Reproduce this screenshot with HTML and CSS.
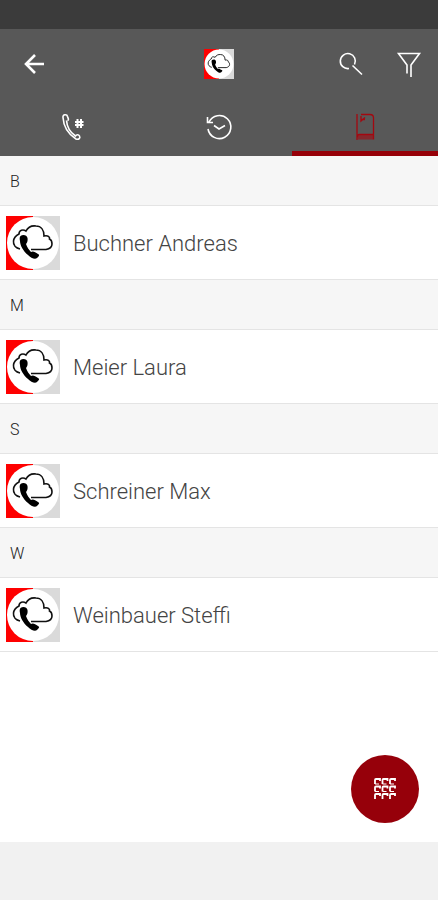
FILE: index.html
```html
<!DOCTYPE html>
<html lang="de">
<head>
<meta charset="utf-8">
<meta name="viewport" content="width=device-width, initial-scale=1">
<title>Kontakte</title>
<link rel="stylesheet" href="styles.css">
</head>
<body>
<svg class="sprite" aria-hidden="true">
  <symbol id="cloud-phone" viewBox="0 0 54 54">
    <path fill="#dadada" d="M0 0h54v54H0z"/>
    <path fill="#fe0000" d="M0 0h27v54H0z"/>
    <circle cx="27" cy="27" r="26" fill="#fff"/>
    <path fill="none" stroke="#111" stroke-width="1.6" d="M14 33C10 32 7 29 7.500 25C8 21 11 19 13 18C13 14 17 13 20 15C22 11 26 9.500 30 10C35 10 38 14 38 20C42 19 44 21 43.500 23C46 24 46 27 46 28C46 31 43 33 40 33.500H25"/>
    <path d="M14.500 20C17 18 21 19 21.500 22C22 25 21 27 20 28C21 31 23 34 25 36C27 34.500 29 36 32 38C34 39 33 40 31 42C29 44 25 42 22 39C17 35 14 29 14 25C13.500 23 13.500 21 14.500 20Z"/>
  </symbol>
</svg>
<div class="status"></div>
<header class="header">
  <div class="toolbar">
    <div class="side">
      <button class="icon-button" type="button" aria-label="Zurück">
        <svg class="icon" viewBox="0 0 24 24"><path stroke-width="2.6" d="M21 12H3M12 3L3 12L12 21"/></svg>
      </button>
    </div>
    <svg class="logo"><use href="#cloud-phone"/></svg>
    <div class="side side-end">
      <button class="icon-button" type="button" aria-label="Suchen">
        <svg class="icon" viewBox="0 0 24 24"><path d="M10 16.500A7.500 7.500 0 1 1 15.500 12.500M13.500 13.500L23 22.500"/></svg>
      </button>
      <button class="icon-button" type="button" aria-label="Filtern">
        <svg class="icon" viewBox="0 0 24 24"><path d="M10 21.500V13L1.500 1.500H22.500L14 13V25"/></svg>
      </button>
    </div>
  </div>
  <nav class="tabs">
    <button class="tab" type="button" aria-label="Wählen">
      <svg class="icon tab-icon" viewBox="0 0 26 26"><path stroke-width="1.600" d="M3 3.500C2.500 0 7 0 7.500 2.500C8.500 5 9 6 7.500 6.500M3 3.500C3.500 12 8 20 16 25C19 26 20.500 24 19.500 22C18.500 20 16.500 20.500 15.500 22C11 19 7 13 6.500 6.500"/><path stroke-width="2" d="M17.500 5V14M21 5V14M15 8H23.500M15 11H23.500"/></svg>
    </button>
    <button class="tab" type="button" aria-label="Verlauf">
      <svg class="icon tab-icon" viewBox="0 0 26 26"><path d="M3 8A11.500 11.500 0 1 1 2 15M1.500 3V8.500H7M8 11.500L13 15L19 11.500"/></svg>
    </button>
    <button class="tab tab-active" type="button" aria-label="Kontakte" aria-current="page">
      <svg class="icon tab-icon" viewBox="0 0 26 26"><path stroke-width="1.300" d="M5 26V0M9 0.500H18C20 0.500 21.500 2 21.500 4V20.500H7C5.500 20.500 5 22 5 26M9 5.500H13M9 2V7L13 3.500M21.500 20V25.500"/><path stroke-width="5" opacity="0.600" d="M6 23H21"/></svg>
    </button>
  </nav>
</header>
<main class="content">
  <section>
    <h2 class="letter">B</h2>
    <a class="contact" href="#"><svg class="avatar"><use href="#cloud-phone"/></svg><span>Buchner Andreas</span></a>
  </section>
  <section>
    <h2 class="letter">M</h2>
    <a class="contact" href="#"><svg class="avatar"><use href="#cloud-phone"/></svg><span>Meier Laura</span></a>
  </section>
  <section>
    <h2 class="letter">S</h2>
    <a class="contact" href="#"><svg class="avatar"><use href="#cloud-phone"/></svg><span>Schreiner Max</span></a>
  </section>
  <section>
    <h2 class="letter">W</h2>
    <a class="contact" href="#"><svg class="avatar"><use href="#cloud-phone"/></svg><span>Weinbauer Steffi</span></a>
  </section>
  <button class="fab" type="button" aria-label="Wähltastatur">
    <svg class="icon" viewBox="0 0 24 24"><path stroke-width="1.800" d="M2 7V3Q2 2 3 2H7V4M9.500 7V3Q9.500 2 10.500 2H14.500V4M17 7V3Q17 2 18 2H22V4M2 14.500V10.500Q2 9.500 3 9.500H7V11.500M9.500 14.500V10.500Q9.500 9.500 10.500 9.500H14.500V11.500M17 14.500V10.500Q17 9.500 18 9.500H22V11.500M2 22V18Q2 17 3 17H7V19M9.500 22V18Q9.500 17 10.500 17H14.500V19M17 22V18Q17 17 18 17H22V19"/><path stroke-width="1" d="M2 7H6M9.500 7H13.500M17 7H21M2 14.500H6M9.500 14.500H13.500M17 14.500H21"/></svg>
  </button>
</main>
<footer class="footer"></footer>
</body>
</html>
```

FILE: styles.css
```css
* {
  box-sizing: border-box;
}

body {
  margin: 0;
  min-height: 100vh;
  display: flex;
  flex-direction: column;
  background: #fff;
  font-family: Roboto, "Liberation Sans", sans-serif;
}

button {
  border: 0;
  padding: 0;
  background: none;
  color: inherit;
  cursor: pointer;
}

.sprite {
  position: absolute;
  width: 0;
  height: 0;
}

.status {
  height: 29px;
  background: #3b3b3b;
}

.header {
  background: #585858;
  color: #fff;
}

.toolbar {
  display: flex;
  align-items: center;
  height: 70px;
  padding: 0 16px;
}

.side {
  flex: 1;
  display: flex;
}

.side-end {
  justify-content: flex-end;
  gap: 32px;
}

.icon-button {
  display: grid;
  place-items: center;
  width: 38px;
  height: 48px;
}

.side-end .icon-button {
  width: 26px;
}

.icon {
  width: 24px;
  height: 24px;
  overflow: visible;
  fill: none;
  stroke: currentColor;
  stroke-width: 1.6;
}

.logo {
  width: 30px;
  height: 30px;
}

.tabs {
  display: grid;
  grid-template-columns: repeat(3, 1fr);
}

.tab {
  display: grid;
  place-items: center;
  height: 57px;
  padding-top: 4px;
  border-bottom: 5px solid transparent;
}

.tab-icon {
  width: 26px;
  height: 26px;
}

.tab-active {
  color: #a30810;
  border-color: #960008;
}

.content {
  position: relative;
  flex: 1;
  padding-bottom: 120px;
}

.letter {
  margin: 0;
  padding: 1px 10px 0;
  height: 50px;
  line-height: 50px;
  border-bottom: 1px solid #e4e4e4;
  background: #f6f6f6;
  color: #222;
  font-size: 16px;
  font-weight: 300;
}

.contact {
  display: flex;
  align-items: center;
  gap: 13px;
  height: 74px;
  padding: 1px 6px 0;
  border-bottom: 1px solid #e4e4e4;
  color: #444;
  font-size: 22px;
  font-weight: 300;
  text-decoration: none;
}

.avatar {
  width: 54px;
  height: 54px;
}

.fab {
  position: absolute;
  right: 19px;
  bottom: 19px;
  display: grid;
  place-items: center;
  width: 68px;
  height: 68px;
  border-radius: 50%;
  background: #96000a;
  color: #fff;
}

.footer {
  height: 58px;
  background: #f1f1f1;
}
```
